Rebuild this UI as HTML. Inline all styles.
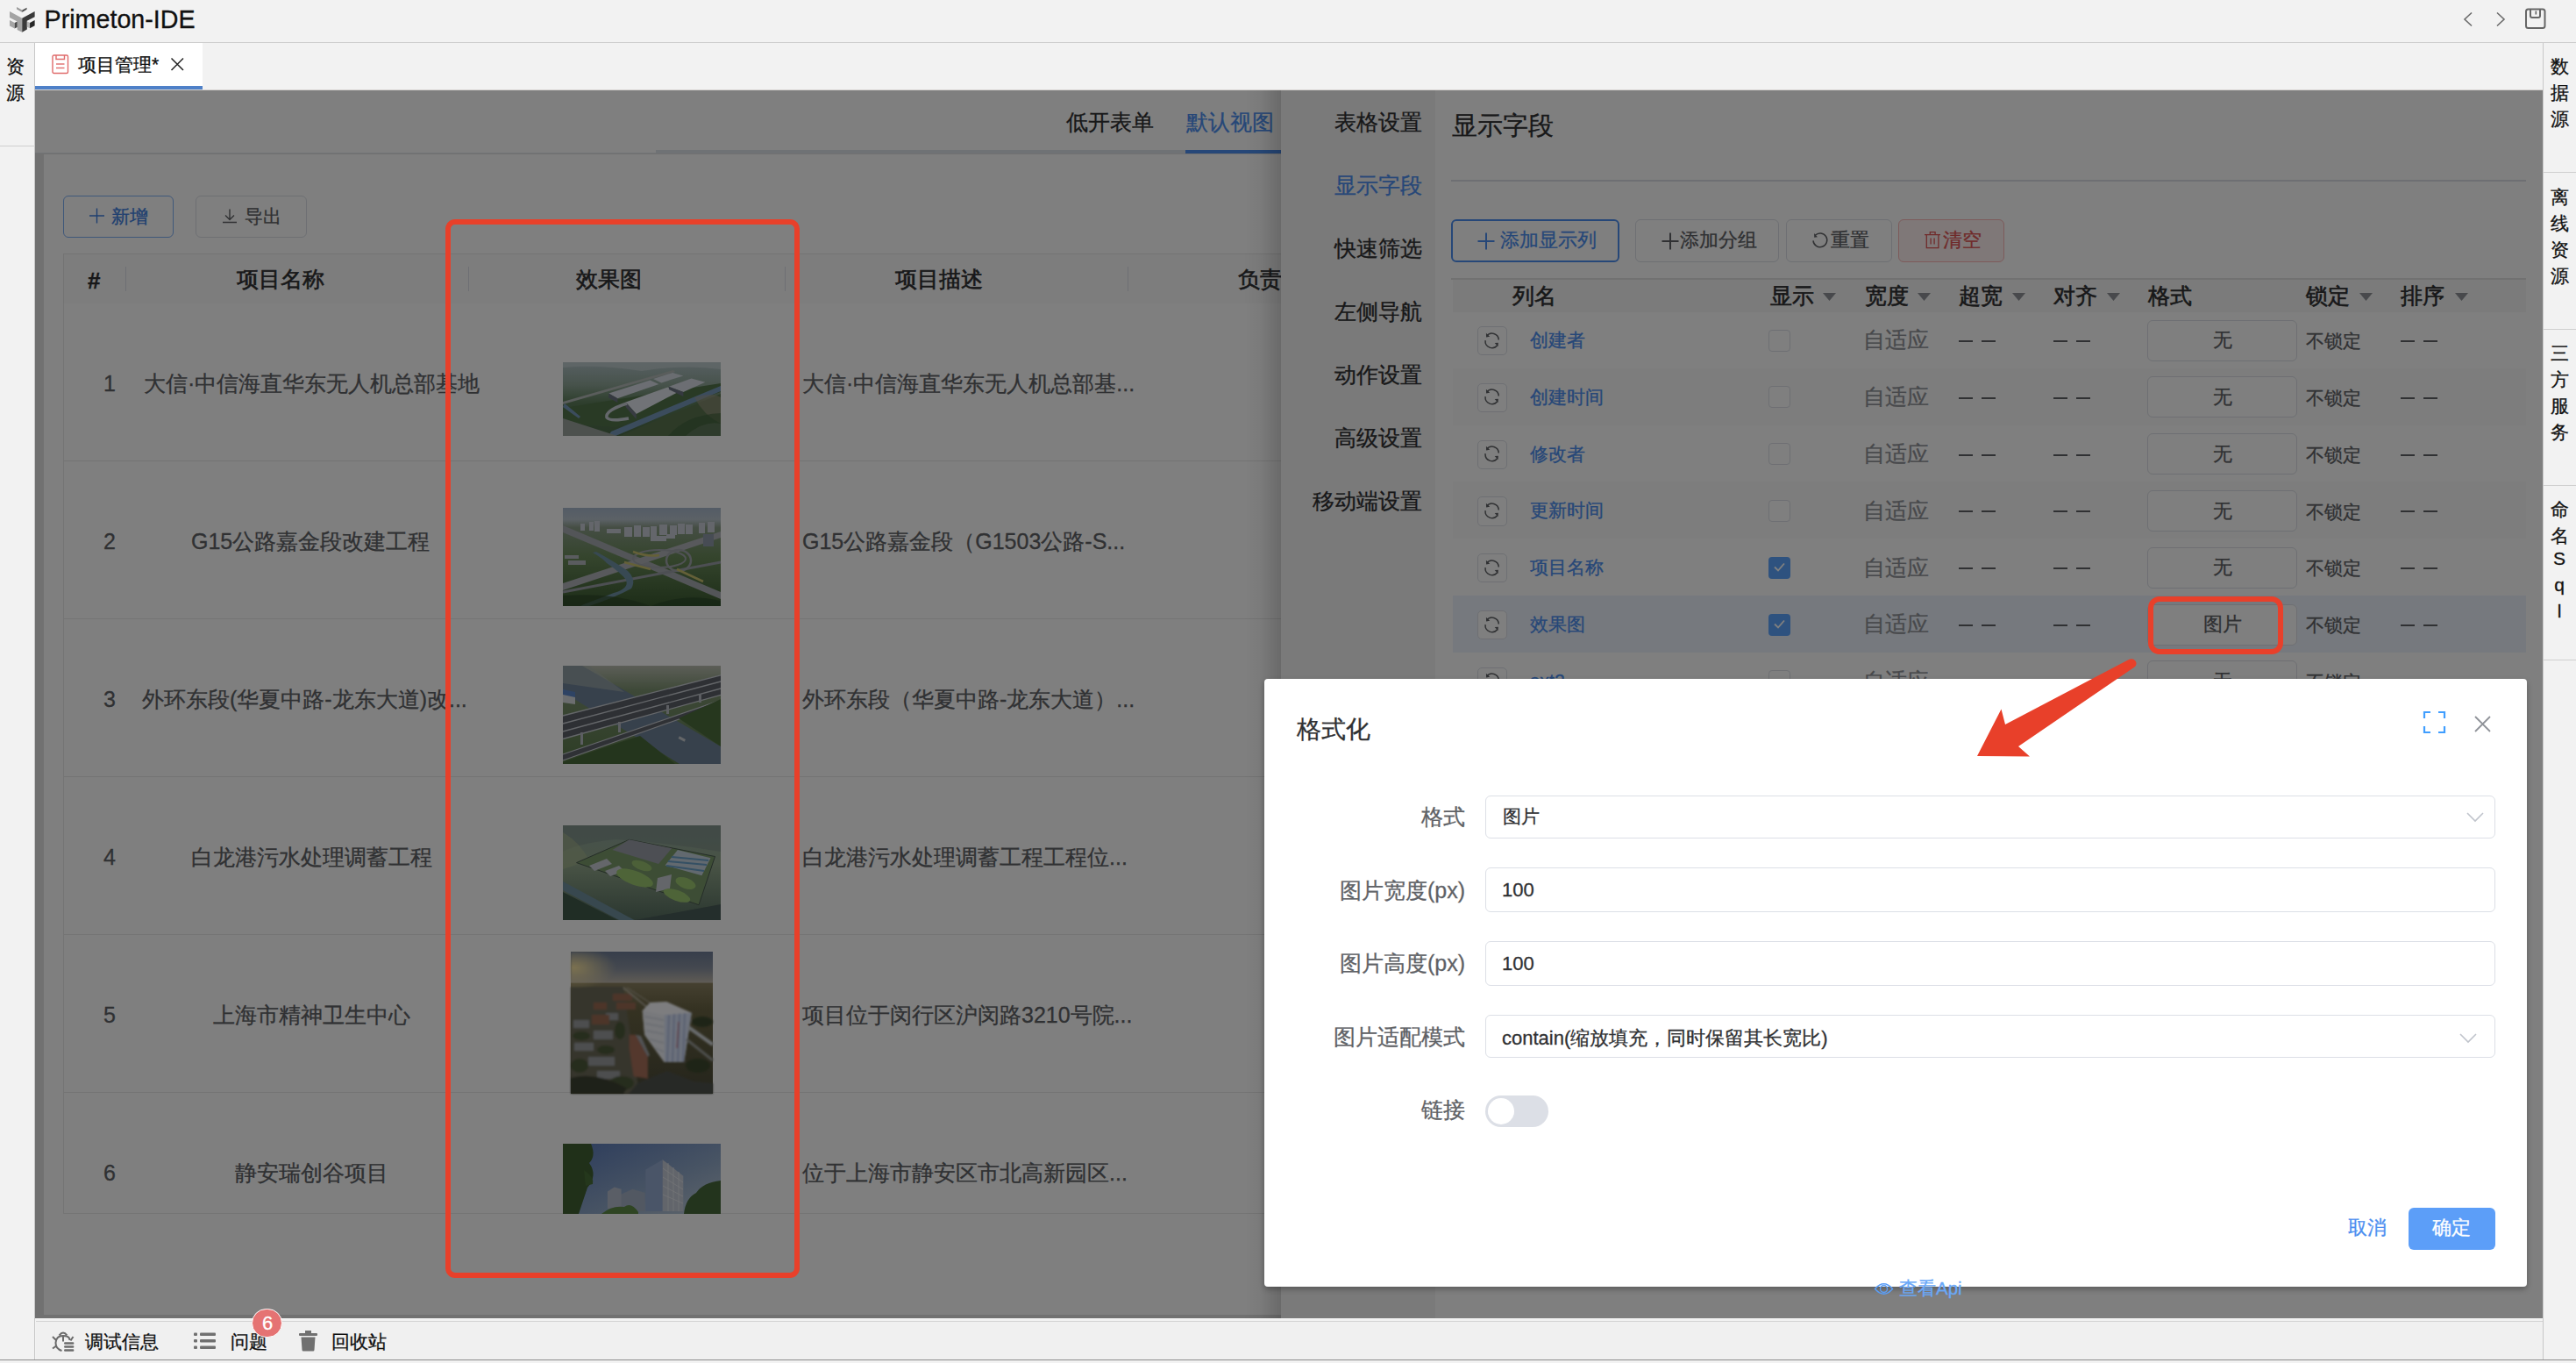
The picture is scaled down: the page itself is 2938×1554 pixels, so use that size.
<!DOCTYPE html><html><head><meta charset="utf-8"><style>
*{margin:0;padding:0;box-sizing:border-box}
html,body{width:2938px;height:1554px;overflow:hidden;background:#f2f2f2;font-family:"Liberation Sans",sans-serif}
.t{position:absolute;white-space:nowrap;line-height:1;-webkit-text-stroke-width:0.3px}
.r{position:absolute}
svg{position:absolute;overflow:visible}
</style></head><body>
<div class="r" style="left:0px;top:0px;width:2938px;height:48px;background:#f2f2f2"></div>
<div class="r" style="left:0px;top:48px;width:2938px;height:1px;background:#cdcdcd"></div>
<svg style="left:5px;top:2px" width="40" height="40" viewBox="0 0 1363 1363">
<polygon points="480,205 690,320 690,410 480,290" fill="#9a9a9a"/>
<polygon points="690,320 870,230 870,300 690,410" fill="#505050"/>
<polygon points="205,375 690,640 690,1180 500,1090 500,770 205,610" fill="#a3a3a3"/>
<polygon points="690,640 1180,375 1180,590 880,745 880,1070 690,1180" fill="#393939"/>
<polygon points="205,715 400,820 400,1040 205,935" fill="#a5a5a5"/>
<polygon points="400,820 500,770 500,990 400,1040" fill="#4a4a4a"/>
<polygon points="880,760 990,815 990,1030 880,980" fill="#b5b5b5"/>
<polygon points="990,815 1180,715 1180,930 990,1030" fill="#262626"/>
</svg>
<div class="t" style="left:50.5px;top:7.8px;font-size:28.7px;color:#111;font-weight:normal;">Primeton-IDE</div>
<svg style="left:2808px;top:13px" width="14" height="18"><polyline points="11,1.5 3,9 11,16.5" fill="none" stroke="#6b6b6b" stroke-width="1.6"/></svg>
<svg style="left:2845px;top:13px" width="14" height="18"><polyline points="3,1.5 11,9 3,16.5" fill="none" stroke="#6b6b6b" stroke-width="1.6"/></svg>
<svg style="left:2879px;top:9px" width="26" height="25"><rect x="2" y="1.5" width="21.5" height="21.5" rx="2.5" fill="none" stroke="#666" stroke-width="2"/><path d="M7 2 V9 Q7 11 9 11 H16 Q18 11 18 9 V2" fill="none" stroke="#666" stroke-width="2"/><rect x="12.5" y="3.5" width="1.6" height="4" fill="#666"/></svg>
<div class="r" style="left:39px;top:49px;width:1px;height:1501px;background:#c8c8c8"></div>
<div class="r" style="left:0px;top:166px;width:40px;height:1px;background:#cfcfcf"></div>
<div class="t" style="left:7px;top:64.8px;font-size:21px;color:#111;font-weight:normal;">资</div>
<div class="t" style="left:7px;top:94.8px;font-size:21px;color:#111;font-weight:normal;">源</div>
<div class="r" style="left:2900px;top:49px;width:1px;height:1501px;background:#c8c8c8"></div>
<div class="r" style="left:2901px;top:196px;width:37px;height:1px;background:#cfcfcf"></div>
<div class="r" style="left:2901px;top:375px;width:37px;height:1px;background:#cfcfcf"></div>
<div class="r" style="left:2901px;top:553px;width:37px;height:1px;background:#cfcfcf"></div>
<div class="r" style="left:2901px;top:752px;width:37px;height:1px;background:#cfcfcf"></div>
<div class="t" style="left:2909px;top:64.8px;font-size:21px;color:#111;font-weight:normal;">数</div>
<div class="t" style="left:2909px;top:94.8px;font-size:21px;color:#111;font-weight:normal;">据</div>
<div class="t" style="left:2909px;top:124.8px;font-size:21px;color:#111;font-weight:normal;">源</div>
<div class="t" style="left:2909px;top:213.8px;font-size:21px;color:#111;font-weight:normal;">离</div>
<div class="t" style="left:2909px;top:243.8px;font-size:21px;color:#111;font-weight:normal;">线</div>
<div class="t" style="left:2909px;top:273.8px;font-size:21px;color:#111;font-weight:normal;">资</div>
<div class="t" style="left:2909px;top:303.8px;font-size:21px;color:#111;font-weight:normal;">源</div>
<div class="t" style="left:2909px;top:391.8px;font-size:21px;color:#111;font-weight:normal;">三</div>
<div class="t" style="left:2909px;top:421.8px;font-size:21px;color:#111;font-weight:normal;">方</div>
<div class="t" style="left:2909px;top:451.8px;font-size:21px;color:#111;font-weight:normal;">服</div>
<div class="t" style="left:2909px;top:481.8px;font-size:21px;color:#111;font-weight:normal;">务</div>
<div class="t" style="left:2909px;top:569.8px;font-size:21px;color:#111;font-weight:normal;">命</div>
<div class="t" style="left:2909px;top:599.8px;font-size:21px;color:#111;font-weight:normal;">名</div>
<div class="t" style="left:2912px;top:626px;font-size:21px;color:#111;font-weight:normal;width:14px;text-align:center">S</div>
<div class="t" style="left:2912px;top:656px;font-size:21px;color:#111;font-weight:normal;width:14px;text-align:center">q</div>
<div class="t" style="left:2912px;top:686px;font-size:21px;color:#111;font-weight:normal;width:14px;text-align:center">l</div>
<div class="r" style="left:40px;top:49px;width:191px;height:49px;background:#fff"></div>
<div class="r" style="left:40px;top:98px;width:191px;height:4px;background:#4e80c8"></div>
<svg style="left:59px;top:62px" width="20" height="23"><rect x="1" y="1" width="17.5" height="20.5" rx="1.5" fill="none" stroke="#e06c6c" stroke-width="1.4"/><path d="M5 1 V5.5 H14.5 V1" fill="none" stroke="#e06c6c" stroke-width="1.4"/><line x1="5" y1="11" x2="14.5" y2="11" stroke="#e06c6c" stroke-width="1.4"/><line x1="5" y1="15.5" x2="14.5" y2="15.5" stroke="#e06c6c" stroke-width="1.4"/></svg>
<div class="t" style="left:89px;top:62.7px;font-size:21.2px;color:#111;font-weight:normal;">项目管理*</div>
<svg style="left:194px;top:65px" width="17" height="17"><path d="M1.5 1.5 L15 15 M15 1.5 L1.5 15" stroke="#222" stroke-width="1.5"/></svg>
<div class="r" style="left:41px;top:1503px;width:2859px;height:3px;background:#f2f2f2"></div>
<div class="r" style="left:41px;top:1506px;width:2859px;height:1px;background:#d3d3d3"></div>
<div class="r" style="left:41px;top:1507px;width:2859px;height:43px;background:#f0f0f0"></div>
<div class="r" style="left:0px;top:1550px;width:2938px;height:1px;background:#8c8c8c"></div>
<div class="r" style="left:0px;top:1551px;width:2938px;height:3px;background:#f2f2f2"></div>
<div class="r" style="left:40px;top:102px;width:2860px;height:1px;background:#d6d3d0"></div>
<div class="r" style="left:40px;top:103px;width:2860px;height:1400px;background:#e2e2e2"></div>
<div class="r" style="left:40px;top:103px;width:2860px;height:71px;background:#fff"></div>
<div class="r" style="left:40px;top:174px;width:2860px;height:1px;background:#e4e7ed"></div>
<div class="r" style="left:748px;top:171px;width:604px;height:4px;background:#dfe4ea"></div>
<div class="r" style="left:1352px;top:171px;width:120px;height:4px;background:#4c8ff0"></div>
<div class="t" style="left:1216px;top:127.4px;font-size:25px;color:#303133;font-weight:normal;">低开表单</div>
<div class="t" style="left:1352.5px;top:127.4px;font-size:25px;color:#4c8ff0;font-weight:normal;">默认视图</div>
<div class="r" style="left:50px;top:176px;width:1500px;height:1323px;background:#fff"></div>
<div class="r" style="left:72px;top:223px;width:126px;height:48px;border:1.2px solid #7fb0f5;border-radius:6px;background:#fff"></div>
<svg style="left:100px;top:236px" width="22" height="22"><path d="M10.5 1.5 V18.5 M2 10 H19" stroke="#3d7ee0" stroke-width="1.4"/></svg>
<div class="t" style="left:127px;top:235.8px;font-size:21px;color:#3d7ee0;font-weight:normal;">新增</div>
<div class="r" style="left:223px;top:223px;width:127px;height:48px;border:1.5px solid #dcdfe6;border-radius:6px;background:#fff"></div>
<svg style="left:252px;top:237px" width="20" height="20"><path d="M10 1.5 V13.5 M5 8.5 L10 13.5 L15 8.5 M2 16.5 H18" fill="none" stroke="#606266" stroke-width="1.4"/></svg>
<div class="t" style="left:279px;top:235.8px;font-size:21px;color:#606266;font-weight:normal;">导出</div>
<div class="r" style="left:72px;top:289px;width:1400px;height:57.5px;background:#fafafa;border-top:1px solid #e6e6e6;border-bottom:1.5px solid #e2e2e2;border-left:1px solid #e6e6e6"></div>
<div class="r" style="left:143px;top:304px;width:1px;height:28px;background:#dcdfe6"></div>
<div class="r" style="left:534px;top:304px;width:1px;height:28px;background:#dcdfe6"></div>
<div class="r" style="left:895px;top:304px;width:1px;height:28px;background:#dcdfe6"></div>
<div class="r" style="left:1286px;top:304px;width:1px;height:28px;background:#dcdfe6"></div>
<div class="t" style="left:100px;top:306.5px;font-size:26px;color:#303133;font-weight:bold;-webkit-text-stroke-width:0.4px">#</div>
<div class="t" style="left:270px;top:306.4px;font-size:25px;color:#303133;font-weight:normal;-webkit-text-stroke-width:0.6px">项目名称</div>
<div class="t" style="left:657px;top:306.4px;font-size:25px;color:#303133;font-weight:normal;-webkit-text-stroke-width:0.6px">效果图</div>
<div class="t" style="left:1021px;top:306.4px;font-size:25px;color:#303133;font-weight:normal;-webkit-text-stroke-width:0.6px">项目描述</div>
<div class="t" style="left:1412px;top:306.4px;font-size:25px;color:#303133;font-weight:normal;-webkit-text-stroke-width:0.6px">负责</div>
<div class="r" style="left:72px;top:346px;width:1400px;height:180px;border-left:1px solid #e8e8e8;border-bottom:1px solid #e8e8e8;background:#fff"></div>
<div class="t" style="left:118px;top:424.5px;font-size:25px;color:#606266;font-weight:normal;">1</div>
<div class="t" style="left:164px;top:424.5px;font-size:25px;color:#606266;font-weight:normal;">大信·中信海直华东无人机总部基地</div>
<div class="t" style="left:915px;top:424.5px;font-size:25px;color:#606266;font-weight:normal;">大信·中信海直华东无人机总部基...</div>
<div class="r" style="left:72px;top:526px;width:1400px;height:180px;border-left:1px solid #e8e8e8;border-bottom:1px solid #e8e8e8;background:#fff"></div>
<div class="t" style="left:118px;top:604.5px;font-size:25px;color:#606266;font-weight:normal;">2</div>
<div class="t" style="left:218px;top:604.5px;font-size:25px;color:#606266;font-weight:normal;">G15公路嘉金段改建工程</div>
<div class="t" style="left:915px;top:604.5px;font-size:25px;color:#606266;font-weight:normal;">G15公路嘉金段（G1503公路-S...</div>
<div class="r" style="left:72px;top:706px;width:1400px;height:180px;border-left:1px solid #e8e8e8;border-bottom:1px solid #e8e8e8;background:#fff"></div>
<div class="t" style="left:118px;top:784.5px;font-size:25px;color:#606266;font-weight:normal;">3</div>
<div class="t" style="left:162px;top:784.5px;font-size:25px;color:#606266;font-weight:normal;">外环东段(华夏中路-龙东大道)改...</div>
<div class="t" style="left:915px;top:784.5px;font-size:25px;color:#606266;font-weight:normal;">外环东段（华夏中路-龙东大道）...</div>
<div class="r" style="left:72px;top:886px;width:1400px;height:180px;border-left:1px solid #e8e8e8;border-bottom:1px solid #e8e8e8;background:#fff"></div>
<div class="t" style="left:118px;top:964.5px;font-size:25px;color:#606266;font-weight:normal;">4</div>
<div class="t" style="left:218px;top:964.5px;font-size:25px;color:#606266;font-weight:normal;">白龙港污水处理调蓄工程</div>
<div class="t" style="left:915px;top:964.5px;font-size:25px;color:#606266;font-weight:normal;">白龙港污水处理调蓄工程工程位...</div>
<div class="r" style="left:72px;top:1066px;width:1400px;height:180px;border-left:1px solid #e8e8e8;border-bottom:1px solid #e8e8e8;background:#fff"></div>
<div class="t" style="left:118px;top:1144.5px;font-size:25px;color:#606266;font-weight:normal;">5</div>
<div class="t" style="left:243px;top:1144.5px;font-size:25px;color:#606266;font-weight:normal;">上海市精神卫生中心</div>
<div class="t" style="left:915px;top:1144.5px;font-size:25px;color:#606266;font-weight:normal;">项目位于闵行区沪闵路3210号院...</div>
<div class="r" style="left:72px;top:1246px;width:1400px;height:138px;border-left:1px solid #e8e8e8;border-bottom:1px solid #e8e8e8;background:#fff"></div>
<div class="t" style="left:118px;top:1324.5px;font-size:25px;color:#606266;font-weight:normal;">6</div>
<div class="t" style="left:268px;top:1324.5px;font-size:25px;color:#606266;font-weight:normal;">静安瑞创谷项目</div>
<div class="t" style="left:915px;top:1324.5px;font-size:25px;color:#606266;font-weight:normal;">位于上海市静安区市北高新园区...</div>
<svg style="left:642px;top:413px" width="180" height="84" viewBox="0 0 180 84">
<defs><linearGradient id="g1" x1="0" y1="0" x2="0" y2="1"><stop offset="0" stop-color="#aebfc4"/><stop offset="0.3" stop-color="#8fa698"/><stop offset="0.55" stop-color="#5d7d5a"/><stop offset="1" stop-color="#4c6a48"/></linearGradient>
<filter id="b1" x="-5%" y="-5%" width="110%" height="110%"><feGaussianBlur stdDeviation="0.6"/></filter></defs>
<rect width="180" height="84" fill="url(#g1)"/>
<g filter="url(#b1)">
<path d="M0 6 Q40 2 90 10 Q140 2 180 8 L180 0 L0 0Z" fill="#c4d0d2" opacity="0.7"/>
<path d="M0 45 L126 9 L128 11 L0 48Z" fill="#b4bbb8"/>
<path d="M0 52 L180 24 L180 34 L60 74 L0 70Z" fill="#52744c"/>
<polygon points="52.3,35.6 99.4,20.6 109.4,24.9 62.3,41.3" fill="#d8dde6"/>
<polygon points="52.3,35.6 62.3,41.3 62.3,46 52.3,40.6" fill="#6b7280"/>
<polygon points="103,19.1 125.1,12 137.3,15.6 112.3,23.4" fill="#d5dae3"/>
<polygon points="71.6,45.6 119.4,28.6 132.3,33.4 83.7,59.1" fill="#e2e6ee"/>
<polygon points="71.6,45.6 83.7,59.1 83.7,65 71.6,51" fill="#6f7684"/>
<polygon points="120.9,27.7 146.6,18.4 162.3,22.7 137.3,34.1" fill="#d8dde6"/>
<polygon points="120.9,27.7 137.3,34.1 137.3,39 120.9,31" fill="#6b7280"/>
<path d="M73 47 Q48 55 50 63 Q54 68 75 64" fill="none" stroke="#c9ced6" stroke-width="3.5"/>
<path d="M55 79 L180 27 L180 33 L60 84 L52 84Z" fill="#7799bb"/>
<path d="M2 47 L20 62 L18 64 L0 51Z" fill="#7799bb"/>
<path d="M0 64 L62 84 L0 84Z" fill="#9aa29c"/>
<path d="M65 84 L180 36 L180 84Z" fill="#5a7550"/>
<path d="M150 40 Q170 34 180 40 L180 70 Q160 60 150 40Z" fill="#a89c88" opacity="0.5"/>
<path d="M140 84 Q160 66 180 70 L180 84Z" fill="#b8c0b8" opacity="0.5"/>
<path d="M120 84 Q140 60 180 58 L180 84Z" fill="#3f5f3a" opacity="0.6"/>
</g></svg>
<svg style="left:642px;top:579px" width="180" height="112" viewBox="0 0 180 112">
<defs><linearGradient id="g2" x1="0" y1="0" x2="0" y2="1"><stop offset="0" stop-color="#a8b8cc"/><stop offset="0.12" stop-color="#b8c3cc"/><stop offset="0.2" stop-color="#8a9c88"/><stop offset="0.5" stop-color="#6a8a5a"/><stop offset="1" stop-color="#3a5a30"/></linearGradient>
<filter id="b2" x="-5%" y="-5%" width="110%" height="110%"><feGaussianBlur stdDeviation="0.6"/></filter></defs>
<rect width="180" height="112" fill="url(#g2)"/>
<g filter="url(#b2)">
<g fill="#c8cdd6"><rect x="70" y="22" width="9" height="11"/><rect x="81" y="20" width="8" height="13"/><rect x="91" y="22" width="8" height="11"/><rect x="100" y="21" width="7" height="11"/><rect x="110" y="19" width="9" height="12"/><rect x="122" y="20" width="8" height="11"/><rect x="131" y="18" width="8" height="12"/><rect x="140" y="19" width="8" height="11"/><rect x="155" y="17" width="7" height="12"/><rect x="165" y="16" width="8" height="12"/><rect x="30" y="16" width="5" height="10"/><rect x="36" y="15" width="6" height="12"/><rect x="20" y="18" width="5" height="8"/><rect x="50" y="24" width="16" height="5"/><rect x="100" y="32" width="18" height="6"/><rect x="118" y="30" width="10" height="5"/></g>
<path d="M0 20 L180 96 L180 104 L0 28Z" fill="#a7aab0"/>
<path d="M0 86 L180 27 L180 34 L0 94Z" fill="#b0b3b8"/>
<path d="M0 96 L180 62" stroke="#9a9ea6" stroke-width="3"/>
<ellipse cx="132" cy="60" rx="14" ry="12" fill="none" stroke="#a0a4aa" stroke-width="2.5"/>
<ellipse cx="110" cy="58" rx="30" ry="10" fill="none" stroke="#a0a4aa" stroke-width="2"/>
<path d="M80 50 Q96 56 110 54 M70 62 L100 70 M130 70 L160 84" stroke="#c9c070" stroke-width="2.5" fill="none"/>
<path d="M34 51 Q46 58 50 63 Q66 74 72 82 Q76 92 58 97 Q40 104 24 110 L20 112 L30 112 Q60 102 78 92 Q84 82 74 72 Q60 62 38 50Z" fill="#6f93a6"/>
<rect x="2" y="54" width="16" height="4" fill="#b4b8be"/><rect x="6" y="60" width="20" height="5" fill="#b4b8be"/>
<path d="M0 100 Q60 96 100 112 L0 112Z" fill="#2f4a2a" opacity="0.7"/>
<path d="M100 112 Q140 96 180 106 L180 112Z" fill="#2a4228" opacity="0.6"/>
<rect x="160" y="30" width="12" height="14" fill="#8f99a8"/>
</g></svg>
<svg style="left:642px;top:759px" width="180" height="112" viewBox="0 0 180 112">
<defs><linearGradient id="g3" x1="0" y1="0" x2="0" y2="1"><stop offset="0" stop-color="#b9bdb0"/><stop offset="0.25" stop-color="#7c9270"/><stop offset="1" stop-color="#5a7a4a"/></linearGradient>
<filter id="b3" x="-5%" y="-5%" width="110%" height="110%"><feGaussianBlur stdDeviation="0.6"/></filter></defs>
<rect width="180" height="112" fill="url(#g3)"/>
<g filter="url(#b3)">
<polygon points="0,0 22,0 180,92 180,112 133,112 0,30" fill="#6e8298"/>
<polygon points="0,0 30,0 70,30 0,20" fill="#a9b2ae" opacity="0.6"/>
<polygon points="0,27 14,35 14,44 0,42" fill="#d9dde0"/>
<polygon points="0,27 14,30 14,36 0,33" fill="#5b86c8"/>
<polygon points="0,57 180,10.8 180,33.3 0,83.5" fill="#5b6068"/>
<path d="M0 57 L180 10.8 M0 66 L180 18 M0 75 L180 26 M0 83.5 L180 33.3" stroke="#c8ccd2" stroke-width="1.3"/>
<polygon points="0,101 180,39.4 180,44 0,108" fill="#5e636b"/>
<path d="M0 101 L180 39.4 M0 108 L180 44" stroke="#c8ccd2" stroke-width="1.2"/>
<rect x="20" y="76" width="3" height="14" fill="#b8bcc4"/><rect x="63" y="64" width="3" height="12" fill="#b8bcc4"/><rect x="118" y="45" width="3" height="10" fill="#b8bcc4"/><rect x="155" y="32" width="3" height="10" fill="#b8bcc4"/>
<path d="M0 110 L0 112 L128 112 L88 80 Q40 95 0 110Z" fill="#4a6a3a"/>
<path d="M132 60 L180 38 L180 92Z" fill="#4e6e3e"/>
<rect x="132" y="82" width="8" height="3" fill="#c8ccd0" transform="rotate(28 136 83)"/>
</g></svg>
<svg style="left:642px;top:941px" width="180" height="108" viewBox="0 0 180 108">
<defs><linearGradient id="g4" x1="0" y1="0" x2="0" y2="1"><stop offset="0" stop-color="#8aa09a"/><stop offset="0.4" stop-color="#93a88c"/><stop offset="1" stop-color="#566e60"/></linearGradient>
<filter id="b4" x="-5%" y="-5%" width="110%" height="110%"><feGaussianBlur stdDeviation="0.6"/></filter></defs>
<rect width="180" height="108" fill="url(#g4)"/>
<g filter="url(#b4)">
<path d="M0 0 L180 0 L180 30 Q120 20 60 16 Q20 20 0 30Z" fill="#7f9088" opacity="0.7"/>
<path d="M0 8 Q20 20 30 40 L0 50Z" fill="#a8b890" opacity="0.6"/>
<polygon points="15.5,42.6 75.7,16.3 173.5,35.5 155,90.7" fill="#7a9a6a" stroke="#4a5a50" stroke-width="1"/>
<polygon points="56.4,28 75.7,16.3 124.2,26.3 109.1,43.9" fill="#9a9ea8"/>
<polygon points="116.6,45.6 130.9,28 168.5,37.2 158.4,57.3" fill="#c4d2de"/>
<path d="M120 41 L164 45 M118 46 L161 52 M124 36 L166 40" stroke="#6aa0c8" stroke-width="2"/>
<polygon points="30,46 50,38 56,44 36,52" fill="#c8ccd4"/><polygon points="48,52 64,46 70,52 54,58" fill="#c8ccd4"/>
<polygon points="108,60 124,56 122,72 106,76" fill="#c8ccd4"/>
<ellipse cx="82" cy="60" rx="22" ry="8" fill="#9cc870" transform="rotate(20 82 60)"/>
<ellipse cx="90" cy="46" rx="12" ry="5" fill="#98c070" transform="rotate(20 90 46)"/>
<ellipse cx="140" cy="66" rx="12" ry="6" fill="#9cc870" transform="rotate(20 140 66)"/>
<ellipse cx="130" cy="80" rx="16" ry="6" fill="#9cc870" transform="rotate(20 130 80)"/>
<path d="M0 64 L81.5 108 L64 108 L0 74Z" fill="#6f909e"/>
<path d="M0 76 L62 108 L0 108Z" fill="#3f5a4c"/>
<path d="M82 108 L180 90 L180 108Z" fill="#4a5c58"/>
</g></svg>
<svg style="left:651px;top:1085px" width="162" height="162" viewBox="0 0 162 162">
<defs><linearGradient id="g5" x1="0" y1="0" x2="0" y2="1"><stop offset="0" stop-color="#6e7c96"/><stop offset="0.12" stop-color="#8a92a0"/><stop offset="0.215" stop-color="#bdb6aa"/><stop offset="0.225" stop-color="#8a8060"/><stop offset="0.4" stop-color="#6a6444"/><stop offset="1" stop-color="#4a4a38"/></linearGradient>
<radialGradient id="s5" cx="0.02" cy="0.23" r="0.3"><stop offset="0" stop-color="#ffe8a0" stop-opacity="0.95"/><stop offset="1" stop-color="#ffe8a0" stop-opacity="0"/></radialGradient>
<filter id="b5" x="-5%" y="-5%" width="110%" height="110%"><feGaussianBlur stdDeviation="0.8"/></filter></defs>
<rect width="162" height="162" fill="url(#g5)"/>
<g filter="url(#b5)">
<path d="M0 40 L60 40 L78 162 L0 162Z" fill="#6c6a58"/>
<rect width="162" height="80" fill="url(#s5)"/>
<g fill="#9a9c9e"><rect x="3" y="78" width="18" height="9"/><rect x="26" y="90" width="22" height="10"/><rect x="4" y="104" width="22" height="9"/><rect x="20" y="120" width="30" height="10"/><rect x="30" y="136" width="26" height="9"/><rect x="40" y="70" width="14" height="8"/></g>
<g fill="#9a6a52"><rect x="26" y="58" width="15" height="8"/><rect x="24" y="72" width="20" height="11"/><rect x="48" y="48" width="22" height="8"/><rect x="52" y="58" width="22" height="8"/></g>
<g fill="#4e5a3a"><ellipse cx="12" cy="96" rx="10" ry="5"/><ellipse cx="40" cy="112" rx="10" ry="5"/><ellipse cx="10" cy="130" rx="10" ry="8"/><ellipse cx="58" cy="150" rx="14" ry="8"/><ellipse cx="56" cy="90" rx="6" ry="10"/></g>
<path d="M60 41 L90 66" stroke="#c4c0b4" stroke-width="1.5"/>
<path d="M64 41 L96 62" stroke="#b8b4a8" stroke-width="1"/>
<polygon points="81.7,67.3 90.4,58 109.1,57 137.8,69.8 129.1,126 106.6,126 84.2,94.8" fill="#fafbff"/>
<polygon points="106.6,72.3 137.8,69.8 129.1,126 106.6,126" fill="#d8e2f8"/>
<polygon points="81.7,67.3 106.6,72.3 106.6,126 84.2,94.8" fill="#f0f2f8"/>
<path d="M84 74 L106 78 M85 82 L106 86 M86 90 L106 94 M90 100 L106 104 M96 110 L106 114" stroke="#b4bccc" stroke-width="0.8"/>
<path d="M112 72 L110 126 M118 71 L116 126 M124 70.5 L122 126 M130 70 L128 126" stroke="#8a9ccc" stroke-width="1"/>
<path d="M123 80 L121 110" stroke="#c05050" stroke-width="1"/>
<polygon points="66.7,94.8 74,94.8 87.9,119.7 87.9,144.7 71.7,142.2 66.7,110" fill="#a8705a"/>
<polygon points="74,94.8 80,96 90,118 87.9,119.7" fill="#a4a6aa"/>
<path d="M134 86 L162 106" stroke="#d0d4d8" stroke-width="4"/>
<path d="M132 100 L162 124" stroke="#9a9c98" stroke-width="3"/>
<path d="M66 162 L76 150 L110 136 L140 148 L162 150 L162 162Z" fill="#50524e"/>
<path d="M0 144 Q30 136 64 156 L60 162 L0 162Z" fill="#3e4232"/>
<g fill="#3e4a2e"><ellipse cx="150" cy="80" rx="12" ry="6"/><ellipse cx="145" cy="130" rx="14" ry="8"/></g>
</g></svg>
<svg style="left:642px;top:1304px" width="180" height="80" viewBox="0 0 180 80">
<defs><linearGradient id="g6" x1="0" y1="0" x2="1" y2="1"><stop offset="0" stop-color="#5878b8"/><stop offset="0.6" stop-color="#90a8c8"/><stop offset="1" stop-color="#c0ccd8"/></linearGradient>
<filter id="b6" x="-5%" y="-5%" width="110%" height="110%"><feGaussianBlur stdDeviation="0.6"/></filter></defs>
<rect width="180" height="80" fill="url(#g6)"/>
<g filter="url(#b6)">
<polygon points="94.4,29.6 113.7,18.2 113.7,77 94.4,77" fill="#95aad0"/>
<polygon points="113.7,18.2 137.3,36.8 137.3,77 113.7,77" fill="#c4cad6"/>
<path d="M114 28 L137 44 M114 38 L137 52 M114 48 L137 60 M114 58 L137 68 M120 22 L120 77 M126 27 L126 77 M132 32 L132 77" stroke="#e6e8ee" stroke-width="0.8"/>
<polygon points="65,58.2 79.4,51.8 93.7,56.1 93.7,77 65,77" fill="#a4b0c4"/>
<polygon points="50.9,54.6 58.7,49.6 66.6,51.8 66.6,74 50.9,74" fill="#b4bccc"/>
<path d="M0 0 L32 0 Q38 14 30 22 Q40 36 28 50 Q24 62 18 80 L0 80Z" fill="#3f6030"/>
<path d="M24 30 Q36 38 34 46 L26 48Z" fill="#4a6e38"/>
<path d="M180 42 Q160 44 152 56 Q140 62 138 80 L180 80Z" fill="#47683a"/>
<path d="M44 80 Q56 70 70 72 Q78 66 86 78 L86 80Z" fill="#5e8a46"/>
</g></svg>
<div class="r" style="left:1419px;top:103px;width:42px;height:1400px;background:linear-gradient(to right, rgba(0,0,0,0) 0%, rgba(0,0,0,0.04) 45%, rgba(0,0,0,0.17) 100%)"></div>
<div class="r" style="left:1461px;top:103px;width:1439px;height:1400px;background:#fff"></div>
<div class="r" style="left:1461px;top:103px;width:176px;height:1400px;background:#f4f4f5"></div>
<div class="t" style="left:1522.2px;top:126.9px;font-size:25px;color:#303133;font-weight:normal;">表格设置</div>
<div class="t" style="left:1522.2px;top:198.9px;font-size:25px;color:#4c8ff0;font-weight:normal;">显示字段</div>
<div class="t" style="left:1522.2px;top:270.9px;font-size:25px;color:#303133;font-weight:normal;">快速筛选</div>
<div class="t" style="left:1522.2px;top:342.9px;font-size:25px;color:#303133;font-weight:normal;">左侧导航</div>
<div class="t" style="left:1522.2px;top:414.9px;font-size:25px;color:#303133;font-weight:normal;">动作设置</div>
<div class="t" style="left:1522.2px;top:486.9px;font-size:25px;color:#303133;font-weight:normal;">高级设置</div>
<div class="t" style="left:1497.2px;top:558.9px;font-size:25px;color:#303133;font-weight:normal;">移动端设置</div>
<div class="t" style="left:1656px;top:128.8px;font-size:29px;color:#303133;font-weight:normal;">显示字段</div>
<div class="r" style="left:1655px;top:205px;width:1226px;height:2px;background:#dcdfe6"></div>
<div class="r" style="left:1655px;top:250px;width:192px;height:49px;border:2px solid #4c8ff0;border-radius:6px;background:#fff"></div>
<svg style="left:1684px;top:264px" width="22" height="22"><path d="M11 1.5 V20.5 M1.5 11 H20.5" stroke="#4c8ff0" stroke-width="2"/></svg>
<div class="t" style="left:1711px;top:264.1px;font-size:21.5px;color:#4c8ff0;font-weight:normal;">添加显示列</div>
<div class="r" style="left:1865px;top:250px;width:164px;height:49px;border:1.5px solid #dcdfe6;border-radius:6px;background:#fff"></div>
<svg style="left:1894px;top:264px" width="22" height="22"><path d="M11 1.5 V20.5 M1.5 11 H20.5" stroke="#606266" stroke-width="2"/></svg>
<div class="t" style="left:1916px;top:264.1px;font-size:21.5px;color:#606266;font-weight:normal;">添加分组</div>
<div class="r" style="left:2037px;top:250px;width:121px;height:49px;border:1.5px solid #dcdfe6;border-radius:6px;background:#fff"></div>
<svg style="left:2060px;top:255px" width="30" height="30"><path d="M10.3 13.2 A7.9 7.9 0 1 1 8 19.4" fill="none" stroke="#606266" stroke-width="1.5"/><polygon points="9.1,10.9 12.9,15.3 9.2,15.8" fill="#606266"/></svg>
<div class="t" style="left:2088px;top:264.1px;font-size:21.5px;color:#606266;font-weight:normal;">重置</div>
<div class="r" style="left:2165px;top:250px;width:121px;height:49px;border:1.5px solid #fab6b6;border-radius:6px;background:#fef0f0"></div>
<svg style="left:2185px;top:255px" width="30" height="30"><path d="M10 12.6 H28 M16.3 12.3 V9.6 H22.1 V12.3 M12.3 12.8 V27.6 H25.9 V12.8 M17.1 16.4 V23.5 M21.1 16.4 V23.5" fill="none" stroke="#e05555" stroke-width="1.3"/></svg>
<div class="t" style="left:2216px;top:264.1px;font-size:21.5px;color:#e05555;font-weight:normal;">清空</div>
<div class="r" style="left:1655px;top:316.5px;width:1226px;height:2px;background:#e2e2e2"></div>
<div class="r" style="left:1657px;top:318.5px;width:1224px;height:37px;background:#f6f6f6"></div>
<div class="t" style="left:1725px;top:326.3px;font-size:24.5px;color:#303133;font-weight:normal;-webkit-text-stroke-width:0.6px">列名</div>
<div class="t" style="left:2019px;top:326.3px;font-size:24.5px;color:#303133;font-weight:normal;-webkit-text-stroke-width:0.6px">显示</div>
<div class="t" style="left:2126.5px;top:326.3px;font-size:24.5px;color:#303133;font-weight:normal;-webkit-text-stroke-width:0.6px">宽度</div>
<div class="t" style="left:2233.5px;top:326.3px;font-size:24.5px;color:#303133;font-weight:normal;-webkit-text-stroke-width:0.6px">超宽</div>
<div class="t" style="left:2342px;top:326.3px;font-size:24.5px;color:#303133;font-weight:normal;-webkit-text-stroke-width:0.6px">对齐</div>
<div class="t" style="left:2449.5px;top:326.3px;font-size:24.5px;color:#303133;font-weight:normal;-webkit-text-stroke-width:0.6px">格式</div>
<div class="t" style="left:2630px;top:326.3px;font-size:24.5px;color:#303133;font-weight:normal;-webkit-text-stroke-width:0.6px">锁定</div>
<div class="t" style="left:2738px;top:326.3px;font-size:24.5px;color:#303133;font-weight:normal;-webkit-text-stroke-width:0.6px">排序</div>
<svg style="left:2079px;top:334px" width="16" height="10"><polygon points="0,0 15,0 7.5,9" fill="#909399"/></svg>
<svg style="left:2187px;top:334px" width="16" height="10"><polygon points="0,0 15,0 7.5,9" fill="#909399"/></svg>
<svg style="left:2295px;top:334px" width="16" height="10"><polygon points="0,0 15,0 7.5,9" fill="#909399"/></svg>
<svg style="left:2403px;top:334px" width="16" height="10"><polygon points="0,0 15,0 7.5,9" fill="#909399"/></svg>
<svg style="left:2691px;top:334px" width="16" height="10"><polygon points="0,0 15,0 7.5,9" fill="#909399"/></svg>
<svg style="left:2800px;top:334px" width="16" height="10"><polygon points="0,0 15,0 7.5,9" fill="#909399"/></svg>
<div class="r" style="left:1685.2px;top:372.0px;width:33.4px;height:33.2px;border:1.5px solid #dcdfe6;border-radius:5px;background:#fff"></div>
<svg style="left:1685.2px;top:371.5px" width="34" height="34"><path d="M10.5 11.3 A7.6 7.6 0 0 1 24.3 15.5 M9.1 16.2 A7.6 7.6 0 0 0 22.8 21.5" fill="none" stroke="#606266" stroke-width="1.5"/><polygon points="9.9,7.8 14.2,11.7 10.1,12.5" fill="#606266"/><polygon points="23.6,22.9 19.6,19.1 23.8,18.8" fill="#606266"/></svg>
<div class="t" style="left:1744.5px;top:377.9px;font-size:21.3px;color:#4c8ff0;font-weight:normal;">创建者</div>
<div class="r" style="left:2017px;top:375.5px;width:25px;height:25px;border:1.5px solid #dcdfe6;border-radius:4px;background:#fff"></div>
<div class="t" style="left:2125px;top:376.4px;font-size:24.5px;color:#909399;font-weight:normal;">自适应</div>
<div class="r" style="left:2234px;top:388.0px;width:16px;height:2px;background:#606266"></div>
<div class="r" style="left:2260px;top:388.0px;width:16px;height:2px;background:#606266"></div>
<div class="r" style="left:2342px;top:388.0px;width:16px;height:2px;background:#606266"></div>
<div class="r" style="left:2368px;top:388.0px;width:16px;height:2px;background:#606266"></div>
<div class="r" style="left:2738px;top:388.0px;width:16px;height:2px;background:#606266"></div>
<div class="r" style="left:2764px;top:388.0px;width:16px;height:2px;background:#606266"></div>
<div class="r" style="left:2449px;top:364.5px;width:171px;height:47px;border:1.5px solid #dcdfe6;border-radius:6px;background:#fff"></div>
<div class="t" style="left:2523.75px;top:378.1px;font-size:21.5px;color:#606266;font-weight:normal;">无</div>
<div class="t" style="left:2630px;top:378.1px;font-size:21px;color:#606266;font-weight:normal;">不锁定</div>
<div class="r" style="left:1657px;top:419.8px;width:1224px;height:64.8px;background:#fafafa"></div>
<div class="r" style="left:1685.2px;top:436.8px;width:33.4px;height:33.2px;border:1.5px solid #dcdfe6;border-radius:5px;background:#fff"></div>
<svg style="left:1685.2px;top:436.3px" width="34" height="34"><path d="M10.5 11.3 A7.6 7.6 0 0 1 24.3 15.5 M9.1 16.2 A7.6 7.6 0 0 0 22.8 21.5" fill="none" stroke="#606266" stroke-width="1.5"/><polygon points="9.9,7.8 14.2,11.7 10.1,12.5" fill="#606266"/><polygon points="23.6,22.9 19.6,19.1 23.8,18.8" fill="#606266"/></svg>
<div class="t" style="left:1744.5px;top:442.7px;font-size:21.3px;color:#4c8ff0;font-weight:normal;">创建时间</div>
<div class="r" style="left:2017px;top:440.3px;width:25px;height:25px;border:1.5px solid #dcdfe6;border-radius:4px;background:#fff"></div>
<div class="t" style="left:2125px;top:441.2px;font-size:24.5px;color:#909399;font-weight:normal;">自适应</div>
<div class="r" style="left:2234px;top:452.8px;width:16px;height:2px;background:#606266"></div>
<div class="r" style="left:2260px;top:452.8px;width:16px;height:2px;background:#606266"></div>
<div class="r" style="left:2342px;top:452.8px;width:16px;height:2px;background:#606266"></div>
<div class="r" style="left:2368px;top:452.8px;width:16px;height:2px;background:#606266"></div>
<div class="r" style="left:2738px;top:452.8px;width:16px;height:2px;background:#606266"></div>
<div class="r" style="left:2764px;top:452.8px;width:16px;height:2px;background:#606266"></div>
<div class="r" style="left:2449px;top:429.3px;width:171px;height:47px;border:1.5px solid #dcdfe6;border-radius:6px;background:#fff"></div>
<div class="t" style="left:2523.75px;top:442.9px;font-size:21.5px;color:#606266;font-weight:normal;">无</div>
<div class="t" style="left:2630px;top:442.9px;font-size:21px;color:#606266;font-weight:normal;">不锁定</div>
<div class="r" style="left:1685.2px;top:501.6px;width:33.4px;height:33.2px;border:1.5px solid #dcdfe6;border-radius:5px;background:#fff"></div>
<svg style="left:1685.2px;top:501.1px" width="34" height="34"><path d="M10.5 11.3 A7.6 7.6 0 0 1 24.3 15.5 M9.1 16.2 A7.6 7.6 0 0 0 22.8 21.5" fill="none" stroke="#606266" stroke-width="1.5"/><polygon points="9.9,7.8 14.2,11.7 10.1,12.5" fill="#606266"/><polygon points="23.6,22.9 19.6,19.1 23.8,18.8" fill="#606266"/></svg>
<div class="t" style="left:1744.5px;top:507.5px;font-size:21.3px;color:#4c8ff0;font-weight:normal;">修改者</div>
<div class="r" style="left:2017px;top:505.1px;width:25px;height:25px;border:1.5px solid #dcdfe6;border-radius:4px;background:#fff"></div>
<div class="t" style="left:2125px;top:506.0px;font-size:24.5px;color:#909399;font-weight:normal;">自适应</div>
<div class="r" style="left:2234px;top:517.6px;width:16px;height:2px;background:#606266"></div>
<div class="r" style="left:2260px;top:517.6px;width:16px;height:2px;background:#606266"></div>
<div class="r" style="left:2342px;top:517.6px;width:16px;height:2px;background:#606266"></div>
<div class="r" style="left:2368px;top:517.6px;width:16px;height:2px;background:#606266"></div>
<div class="r" style="left:2738px;top:517.6px;width:16px;height:2px;background:#606266"></div>
<div class="r" style="left:2764px;top:517.6px;width:16px;height:2px;background:#606266"></div>
<div class="r" style="left:2449px;top:494.1px;width:171px;height:47px;border:1.5px solid #dcdfe6;border-radius:6px;background:#fff"></div>
<div class="t" style="left:2523.75px;top:507.7px;font-size:21.5px;color:#606266;font-weight:normal;">无</div>
<div class="t" style="left:2630px;top:507.7px;font-size:21px;color:#606266;font-weight:normal;">不锁定</div>
<div class="r" style="left:1657px;top:549.4px;width:1224px;height:64.8px;background:#fafafa"></div>
<div class="r" style="left:1685.2px;top:566.4px;width:33.4px;height:33.2px;border:1.5px solid #dcdfe6;border-radius:5px;background:#fff"></div>
<svg style="left:1685.2px;top:565.9px" width="34" height="34"><path d="M10.5 11.3 A7.6 7.6 0 0 1 24.3 15.5 M9.1 16.2 A7.6 7.6 0 0 0 22.8 21.5" fill="none" stroke="#606266" stroke-width="1.5"/><polygon points="9.9,7.8 14.2,11.7 10.1,12.5" fill="#606266"/><polygon points="23.6,22.9 19.6,19.1 23.8,18.8" fill="#606266"/></svg>
<div class="t" style="left:1744.5px;top:572.3px;font-size:21.3px;color:#4c8ff0;font-weight:normal;">更新时间</div>
<div class="r" style="left:2017px;top:569.9px;width:25px;height:25px;border:1.5px solid #dcdfe6;border-radius:4px;background:#fff"></div>
<div class="t" style="left:2125px;top:570.8px;font-size:24.5px;color:#909399;font-weight:normal;">自适应</div>
<div class="r" style="left:2234px;top:582.4px;width:16px;height:2px;background:#606266"></div>
<div class="r" style="left:2260px;top:582.4px;width:16px;height:2px;background:#606266"></div>
<div class="r" style="left:2342px;top:582.4px;width:16px;height:2px;background:#606266"></div>
<div class="r" style="left:2368px;top:582.4px;width:16px;height:2px;background:#606266"></div>
<div class="r" style="left:2738px;top:582.4px;width:16px;height:2px;background:#606266"></div>
<div class="r" style="left:2764px;top:582.4px;width:16px;height:2px;background:#606266"></div>
<div class="r" style="left:2449px;top:558.9px;width:171px;height:47px;border:1.5px solid #dcdfe6;border-radius:6px;background:#fff"></div>
<div class="t" style="left:2523.75px;top:572.5px;font-size:21.5px;color:#606266;font-weight:normal;">无</div>
<div class="t" style="left:2630px;top:572.5px;font-size:21px;color:#606266;font-weight:normal;">不锁定</div>
<div class="r" style="left:1685.2px;top:631.2px;width:33.4px;height:33.2px;border:1.5px solid #dcdfe6;border-radius:5px;background:#fff"></div>
<svg style="left:1685.2px;top:630.7px" width="34" height="34"><path d="M10.5 11.3 A7.6 7.6 0 0 1 24.3 15.5 M9.1 16.2 A7.6 7.6 0 0 0 22.8 21.5" fill="none" stroke="#606266" stroke-width="1.5"/><polygon points="9.9,7.8 14.2,11.7 10.1,12.5" fill="#606266"/><polygon points="23.6,22.9 19.6,19.1 23.8,18.8" fill="#606266"/></svg>
<div class="t" style="left:1744.5px;top:637.1px;font-size:21.3px;color:#4c8ff0;font-weight:normal;">项目名称</div>
<div class="r" style="left:2017px;top:634.7px;width:25px;height:25px;background:#5ca4ff;border-radius:4px"></div>
<svg style="left:2021px;top:638.2px" width="17" height="17"><path d="M3 8.5 L7 12.5 L14 4.5" fill="none" stroke="#fff" stroke-width="1.8"/></svg>
<div class="t" style="left:2125px;top:635.6px;font-size:24.5px;color:#909399;font-weight:normal;">自适应</div>
<div class="r" style="left:2234px;top:647.2px;width:16px;height:2px;background:#606266"></div>
<div class="r" style="left:2260px;top:647.2px;width:16px;height:2px;background:#606266"></div>
<div class="r" style="left:2342px;top:647.2px;width:16px;height:2px;background:#606266"></div>
<div class="r" style="left:2368px;top:647.2px;width:16px;height:2px;background:#606266"></div>
<div class="r" style="left:2738px;top:647.2px;width:16px;height:2px;background:#606266"></div>
<div class="r" style="left:2764px;top:647.2px;width:16px;height:2px;background:#606266"></div>
<div class="r" style="left:2449px;top:623.7px;width:171px;height:47px;border:1.5px solid #dcdfe6;border-radius:6px;background:#fff"></div>
<div class="t" style="left:2523.75px;top:637.3px;font-size:21.5px;color:#606266;font-weight:normal;">无</div>
<div class="t" style="left:2630px;top:637.3px;font-size:21px;color:#606266;font-weight:normal;">不锁定</div>
<div class="r" style="left:1657px;top:679.0px;width:1224px;height:64.8px;background:#ecf3fc"></div>
<div class="r" style="left:1685.2px;top:696.0px;width:33.4px;height:33.2px;border:1.5px solid #dcdfe6;border-radius:5px;background:#fff"></div>
<svg style="left:1685.2px;top:695.5px" width="34" height="34"><path d="M10.5 11.3 A7.6 7.6 0 0 1 24.3 15.5 M9.1 16.2 A7.6 7.6 0 0 0 22.8 21.5" fill="none" stroke="#606266" stroke-width="1.5"/><polygon points="9.9,7.8 14.2,11.7 10.1,12.5" fill="#606266"/><polygon points="23.6,22.9 19.6,19.1 23.8,18.8" fill="#606266"/></svg>
<div class="t" style="left:1744.5px;top:701.9px;font-size:21.3px;color:#4c8ff0;font-weight:normal;">效果图</div>
<div class="r" style="left:2017px;top:699.5px;width:25px;height:25px;background:#5ca4ff;border-radius:4px"></div>
<svg style="left:2021px;top:703.0px" width="17" height="17"><path d="M3 8.5 L7 12.5 L14 4.5" fill="none" stroke="#fff" stroke-width="1.8"/></svg>
<div class="t" style="left:2125px;top:700.4px;font-size:24.5px;color:#909399;font-weight:normal;">自适应</div>
<div class="r" style="left:2234px;top:712.0px;width:16px;height:2px;background:#606266"></div>
<div class="r" style="left:2260px;top:712.0px;width:16px;height:2px;background:#606266"></div>
<div class="r" style="left:2342px;top:712.0px;width:16px;height:2px;background:#606266"></div>
<div class="r" style="left:2368px;top:712.0px;width:16px;height:2px;background:#606266"></div>
<div class="r" style="left:2738px;top:712.0px;width:16px;height:2px;background:#606266"></div>
<div class="r" style="left:2764px;top:712.0px;width:16px;height:2px;background:#606266"></div>
<div class="r" style="left:2449px;top:688.5px;width:171px;height:47px;border:1.5px solid #dcdfe6;border-radius:6px;background:#fff"></div>
<div class="t" style="left:2513.0px;top:702.1px;font-size:21.5px;color:#606266;font-weight:normal;">图片</div>
<div class="t" style="left:2630px;top:702.1px;font-size:21px;color:#606266;font-weight:normal;">不锁定</div>
<div class="r" style="left:1685.2px;top:760.8px;width:33.4px;height:33.2px;border:1.5px solid #dcdfe6;border-radius:5px;background:#fff"></div>
<svg style="left:1685.2px;top:760.3px" width="34" height="34"><path d="M10.5 11.3 A7.6 7.6 0 0 1 24.3 15.5 M9.1 16.2 A7.6 7.6 0 0 0 22.8 21.5" fill="none" stroke="#606266" stroke-width="1.5"/><polygon points="9.9,7.8 14.2,11.7 10.1,12.5" fill="#606266"/><polygon points="23.6,22.9 19.6,19.1 23.8,18.8" fill="#606266"/></svg>
<div class="t" style="left:1744.5px;top:766.7px;font-size:21.3px;color:#4c8ff0;font-weight:normal;">ext2</div>
<div class="r" style="left:2017px;top:764.3px;width:25px;height:25px;border:1.5px solid #dcdfe6;border-radius:4px;background:#fff"></div>
<div class="t" style="left:2125px;top:765.2px;font-size:24.5px;color:#909399;font-weight:normal;">自适应</div>
<div class="r" style="left:2234px;top:776.8px;width:16px;height:2px;background:#606266"></div>
<div class="r" style="left:2260px;top:776.8px;width:16px;height:2px;background:#606266"></div>
<div class="r" style="left:2342px;top:776.8px;width:16px;height:2px;background:#606266"></div>
<div class="r" style="left:2368px;top:776.8px;width:16px;height:2px;background:#606266"></div>
<div class="r" style="left:2738px;top:776.8px;width:16px;height:2px;background:#606266"></div>
<div class="r" style="left:2764px;top:776.8px;width:16px;height:2px;background:#606266"></div>
<div class="r" style="left:2449px;top:753.3px;width:171px;height:47px;border:1.5px solid #dcdfe6;border-radius:6px;background:#fff"></div>
<div class="t" style="left:2523.75px;top:766.9px;font-size:21.5px;color:#606266;font-weight:normal;">无</div>
<div class="t" style="left:2630px;top:766.9px;font-size:21px;color:#606266;font-weight:normal;">不锁定</div>
<div class="r" style="left:40px;top:103px;width:2860px;height:1400px;background:rgba(0,0,0,0.5)"></div>
<div class="r" style="left:1442px;top:774px;width:1440px;height:692.5px;background:#fff;border-radius:4px;box-shadow:0 3px 6px rgba(0,0,0,0.28)"></div>
<div class="t" style="left:1479px;top:817.3px;font-size:28.4px;color:#303133;font-weight:normal;">格式化</div>
<svg style="left:2764px;top:811px" width="25" height="25"><path d="M1 8 V1 H8 M17 1 H24 V8 M24 17 V24 H17 M8 24 H1 V17" fill="none" stroke="#409eff" stroke-width="2.2"/></svg>
<svg style="left:2822px;top:816px" width="19" height="19"><path d="M1 1 L18 18 M18 1 L1 18" stroke="#909399" stroke-width="1.8"/></svg>
<div class="t" style="right:1267px;top:918.8px;font-size:25px;color:#606266">格式</div>
<div class="t" style="right:1267px;top:1002.8px;font-size:25px;color:#606266">图片宽度(px)</div>
<div class="t" style="right:1267px;top:1085.8px;font-size:25px;color:#606266">图片高度(px)</div>
<div class="t" style="right:1267px;top:1169.8px;font-size:25px;color:#606266">图片适配模式</div>
<div class="t" style="right:1267px;top:1252.8px;font-size:25px;color:#606266">链接</div>
<div class="r" style="left:1694px;top:906.5px;width:1152px;height:49.5px;border:1.5px solid #dcdfe6;border-radius:6px;background:#fff"></div>
<div class="r" style="left:1694px;top:989px;width:1152px;height:50.5px;border:1.5px solid #dcdfe6;border-radius:6px;background:#fff"></div>
<div class="r" style="left:1694px;top:1073px;width:1152px;height:50.5px;border:1.5px solid #dcdfe6;border-radius:6px;background:#fff"></div>
<div class="r" style="left:1694px;top:1157.3px;width:1152px;height:49px;border:1.5px solid #dcdfe6;border-radius:6px;background:#fff"></div>
<div class="t" style="left:1714px;top:920.3px;font-size:21px;color:#303133;font-weight:normal;">图片</div>
<div class="t" style="left:1713px;top:1004px;font-size:22px;color:#303133;font-weight:normal;">100</div>
<div class="t" style="left:1713px;top:1088px;font-size:22px;color:#303133;font-weight:normal;">100</div>
<div class="t" style="left:1713px;top:1172.6px;font-size:22px;color:#303133;font-weight:normal;">contain(缩放填充，同时保留其长宽比)</div>
<svg style="left:2813px;top:925.5px" width="20" height="12"><polyline points="1,1 10,10 19,1" fill="none" stroke="#c0c4cc" stroke-width="1.6"/></svg>
<svg style="left:2805px;top:1177.5px" width="20" height="12"><polyline points="1,1 10,10 19,1" fill="none" stroke="#c0c4cc" stroke-width="1.6"/></svg>
<div class="r" style="left:1694px;top:1249px;width:72px;height:36px;background:#dcdfe6;border-radius:18px"></div>
<div class="r" style="left:1696.5px;top:1252px;width:30px;height:30px;background:#fff;border-radius:15px"></div>
<div class="t" style="left:2678px;top:1389.6px;font-size:21.5px;color:#4c8ff0;font-weight:normal;">取消</div>
<div class="r" style="left:2747px;top:1377px;width:99px;height:48px;background:#5c9ef8;border-radius:6px"></div>
<div class="t" style="left:2774px;top:1389.3px;font-size:22px;color:#fff;font-weight:normal;">确定</div>
<svg style="left:2137px;top:1461px" width="23" height="17"><path d="M1.5 8.5 Q11.5 -3 21.5 8.5 Q11.5 20 1.5 8.5Z" fill="none" stroke="#5a9ef8" stroke-width="1.4"/><circle cx="11.5" cy="8.5" r="4" fill="none" stroke="#5a9ef8" stroke-width="1.4"/></svg>
<div class="t" style="left:2166px;top:1459.2px;font-size:20.5px;color:#6aa8f8;font-weight:normal;">查看Api</div>
<div class="r" style="left:508px;top:250px;width:404px;height:1207px;border:6px solid #e8402a;border-radius:11px"></div>
<div class="r" style="left:2449.5px;top:680.3px;width:154px;height:65.3px;border:6px solid #e8402a;border-radius:13px"></div>
<svg style="left:0;top:0" width="2938" height="1554"><path d="M2426 753 Q2432 749.5 2435.5 753.5 Q2438 757.5 2434.5 760.5 L2302 851 L2315 862.6 L2255 862 L2282.5 808.5 L2287 826 Z" fill="#e8402a"/></svg>
<svg style="left:50px;top:1510px" width="40" height="38"><path d="M29.5 18 Q29.5 13 22 13 Q14 13 13.5 21 Q13.5 28 20.5 30 M17.5 12.5 Q22 6.5 26.5 12.5 M10 14 L13.5 17.5 M10 27.5 L13.5 25 M33.5 14 L30.5 18.5 M22 13.5 V19.5" fill="none" stroke="#6b6b6b" stroke-width="2"/><path d="M24.2 21.5 H33.2 M24.2 25.5 H33.2 M24.2 29.5 H33.2" stroke="#6b6b6b" stroke-width="2.4" stroke-linecap="round"/></svg>
<div class="t" style="left:97px;top:1518.9px;font-size:21.2px;color:#111;font-weight:normal;">调试信息</div>
<svg style="left:221px;top:1519px" width="25" height="20"><g fill="#707070"><rect x="0" y="0.5" width="4" height="3.5" rx="1"/><rect x="0" y="8" width="4" height="3.5" rx="1"/><rect x="0" y="15.5" width="4" height="3.5" rx="1"/><rect x="7" y="0.5" width="18" height="3.5" rx="1"/><rect x="7" y="8" width="18" height="3.5" rx="1"/><rect x="7" y="15.5" width="18" height="3.5" rx="1"/></g></svg>
<div class="t" style="left:263px;top:1519.0px;font-size:21px;color:#111;font-weight:normal;">问题</div>
<svg style="left:341px;top:1517px" width="22" height="24"><rect x="0" y="3" width="21" height="3" rx="1" fill="#707070"/><rect x="7" y="0" width="7" height="3" fill="#707070"/><path d="M2.5 7.5 H18.5 L17.5 22 Q17.5 23.5 16 23.5 H5 Q3.5 23.5 3.5 22Z" fill="#707070"/></svg>
<div class="t" style="left:377.5px;top:1519.0px;font-size:21px;color:#111;font-weight:normal;">回收站</div>
<div class="r" style="left:287.3px;top:1491.5px;width:34.5px;height:33px;background:#e57373;border:1.2px solid #fff;border-radius:17px"></div>
<div class="t" style="left:298.5px;top:1497.5px;font-size:22px;color:#fff;font-weight:normal;width:13px;text-align:center">6</div>
<!--MAIN-->
</body></html>
